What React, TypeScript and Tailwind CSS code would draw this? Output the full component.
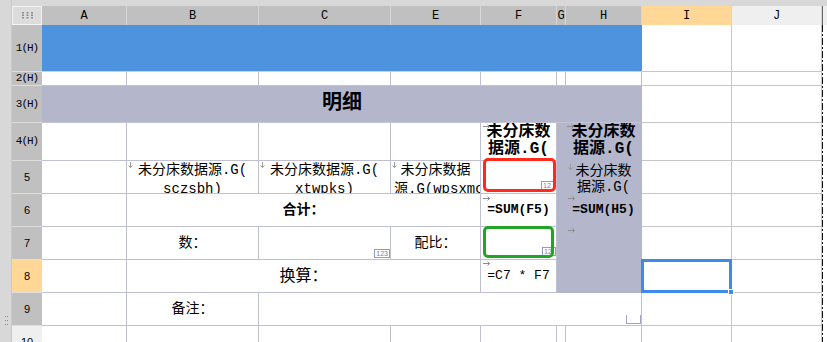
import React from "react";

const mono = "font-['Liberation_Mono','Noto_Sans_CJK_SC',monospace]";
const line = "border-r border-b border-[#bfc0d2] bg-white";
const lineIJ = "border-r border-b border-[#c6c6c6] bg-white";
const lav = "bg-[#b4b7cb]";

function ArrowR({ className = "" }: { className?: string }) {
  return (
    <svg width="8" height="5" viewBox="0 0 8 5" className={`absolute ${className}`}>
      <path d="M0 2.5H6.5M4.5 0.5L6.5 2.5L4.5 4.5" fill="none" stroke="#8c8c8c" />
    </svg>
  );
}

function ArrowD({ className = "" }: { className?: string }) {
  return (
    <svg width="5" height="6" viewBox="0 0 5 6" className={`absolute ${className}`}>
      <path d="M2.5 0V5.5M0.5 3.5L2.5 5.5L4.5 3.5" fill="none" stroke="#9a9a9a" />
    </svg>
  );
}

function TypeTag({ text, className = "" }: { text: string; className?: string }) {
  return (
    <span
      className={`absolute flex h-[9px] items-center overflow-hidden border border-[#8e9dc8] bg-white px-[1px] font-['Liberation_Sans',sans-serif] text-[7px] leading-none text-[#6c80b8] ${className}`}
    >
      {text}
    </span>
  );
}

const colHeads = [
  { label: "A", cls: "col-start-2 bg-[#c0c0c0]" },
  { label: "B", cls: "col-start-3 bg-[#c0c0c0]" },
  { label: "C", cls: "col-start-4 bg-[#c0c0c0]" },
  { label: "E", cls: "col-start-5 bg-[#c0c0c0]" },
  { label: "F", cls: "col-start-6 bg-[#c0c0c0]" },
  { label: "G", cls: "col-start-7 bg-[#c0c0c0]" },
  { label: "H", cls: "col-start-8 bg-[#c0c0c0]" },
  { label: "I", cls: "col-start-9 bg-[#ffd898]" },
  { label: "J", cls: "col-start-10 bg-[#efefef]" },
];

const rowHeads = [
  { label: "1(H)", cls: "row-start-2 bg-[#c0c0c0]", h: true },
  { label: "2(H)", cls: "row-start-3 bg-[#c0c0c0]", h: true },
  { label: "3(H)", cls: "row-start-4 bg-[#c0c0c0]", h: true },
  { label: "4(H)", cls: "row-start-5 bg-[#c0c0c0]", h: true },
  { label: "5", cls: "row-start-6 bg-[#c0c0c0]", h: false },
  { label: "6", cls: "row-start-7 bg-[#c0c0c0]", h: false },
  { label: "7", cls: "row-start-8 bg-[#c0c0c0]", h: false },
  { label: "8", cls: "row-start-9 bg-[#ffd898]", h: false },
  { label: "9", cls: "row-start-10 bg-[#c0c0c0]", h: false },
  { label: "10", cls: "row-start-11 bg-[#efefef]", h: false },
];

const rowStarts = [
  "row-start-2",
  "row-start-3",
  "row-start-4",
  "row-start-5",
  "row-start-6",
  "row-start-7",
  "row-start-8",
  "row-start-9",
  "row-start-10",
  "row-start-11",
];

export default function App() {
  return (
    <div className="flex h-[342px] w-[827px] overflow-hidden bg-[#d8d8d8] text-black">
      {/* left grip strip */}
      <div className="w-[12px] shrink-0 border-r border-[#c9c9c9] pt-[316px] pl-[5px]">
        <svg width="3" height="11" viewBox="0 0 3 11">
          <rect x="0" y="0" width="1" height="1" fill="#8a8a8a" />
          <rect x="2" y="0" width="1" height="1" fill="#8a8a8a" />
          <rect x="0" y="4" width="1" height="1" fill="#8a8a8a" />
          <rect x="2" y="4" width="1" height="1" fill="#8a8a8a" />
          <rect x="0" y="8" width="1" height="1" fill="#8a8a8a" />
          <rect x="2" y="8" width="1" height="1" fill="#8a8a8a" />
        </svg>
      </div>

      <div className="flex-1 overflow-hidden pt-[6px]">
        <div className="grid grid-cols-[30px_85px_132px_132px_90px_76px_9px_76px_90px_90px_1fr] grid-rows-[19px_47px_14px_37px_38px_33px_33px_33px_33px_33px_33px]">
          {/* corner */}
          <div className="col-start-1 row-start-1 flex items-center justify-center border border-[#f3f3f3] bg-[#dcdcdc]">
            <svg width="11" height="7" viewBox="0 0 11 7">
              {[0, 4.5, 9].map((x) =>
                [0, 2.5, 5].map((y) => (
                  <rect key={`${x}-${y}`} x={x} y={y} width="2" height="1.5" fill="#8c8c8c" />
                ))
              )}
            </svg>
          </div>

          {/* column headers */}
          {colHeads.map((c) => (
            <div
              key={c.label}
              className={`row-start-1 flex items-center justify-center overflow-visible border-r border-[#d6d6d6] ${mono} text-[12px] ${c.cls}`}
            >
              {c.label}
            </div>
          ))}
          <div className="col-start-11 row-start-1 border-l border-[#666] bg-[#efefef]" />

          {/* row headers */}
          {rowHeads.map((r) => (
            <div
              key={r.label}
              className={`col-start-1 flex items-center justify-center overflow-hidden border-b border-[#dedede] text-[11px] ${
                r.h
                  ? "font-['Liberation_Mono',monospace] tracking-[-1px]"
                  : "font-['Liberation_Sans',sans-serif]"
              } ${r.cls}`}
            >
              {r.label}
            </div>
          ))}

          {/* I / J columns */}
          {rowStarts.map((rs, i) =>
            i === 7 ? (
              <div key={`i${rs}`} className={`relative z-10 col-start-9 ${rs} ${lineIJ}`}>
                <div className="absolute -top-[1px] -left-[1px] -right-[1px] -bottom-[1px] border-[3px] border-[#3c8aeb]" />
                <div className="absolute -right-[3px] -bottom-[3px] h-[6px] w-[6px] border border-white bg-[#3c8aeb]" />
              </div>
            ) : (
              <div key={`i${rs}`} className={`col-start-9 ${rs} ${lineIJ}`} />
            )
          )}
          {rowStarts.map((rs) => (
            <div key={`j${rs}`} className={`col-start-10 ${rs} ${lineIJ}`} />
          ))}
          <div className="col-start-11 row-start-2 row-span-10 bg-white">
            <svg width="2" height="330" className="block">
              <line x1="0.5" y1="0" x2="0.5" y2="330" stroke="#111" strokeDasharray="7 2 2 2" />
            </svg>
          </div>

          {/* row 1 */}
          <div className="col-start-2 col-span-7 row-start-2 border-b border-[#cfd0dc] bg-[#4e93de]" />

          {/* row 2 */}
          <div className={`col-start-2 row-start-3 ${line}`} />
          <div className={`col-start-3 row-start-3 ${line}`} />
          <div className={`col-start-4 row-start-3 ${line}`} />
          <div className={`col-start-5 row-start-3 ${line}`} />
          <div className={`col-start-6 row-start-3 ${line}`} />
          <div className={`col-start-7 row-start-3 ${line}`} />
          <div className={`col-start-8 row-start-3 ${line}`} />

          {/* row 3 */}
          <div
            className={`col-start-2 col-span-7 row-start-4 flex items-center justify-center border-b border-[#c3c4d4] ${lav} ${mono} text-[20px] font-bold`}
          >
            明细
          </div>

          {/* row 4 */}
          <div className={`col-start-2 row-start-5 ${line}`} />
          <div className={`col-start-3 row-start-5 ${line}`} />
          <div className={`col-start-4 row-start-5 ${line}`} />
          <div className={`col-start-5 row-start-5 ${line}`} />
          <div
            className={`relative col-start-6 row-start-5 overflow-hidden whitespace-nowrap pt-[1px] text-center text-[16px] font-bold leading-[17px] ${mono} ${line}`}
          >
            <ArrowR className="left-[2px] top-[1px]" />
            <div>未分床数</div>
            <div>据源.G(</div>
          </div>

          {/* G/H shaded block */}
          <div className={`col-start-7 row-start-5 row-span-5 ${lav}`} />
          <div
            className={`relative col-start-8 row-start-5 overflow-hidden whitespace-nowrap border-r border-[#b4b7cb] pt-[1px] text-center text-[16px] font-bold leading-[17px] ${mono} ${lav}`}
          >
            <ArrowR className="left-[1px] top-[1px]" />
            <div>未分床数</div>
            <div>据源.G(</div>
          </div>
          <div
            className={`relative col-start-8 row-start-6 overflow-hidden whitespace-nowrap border-r border-[#b4b7cb] pt-[2px] text-center text-[14px] leading-[16px] ${mono} ${lav}`}
          >
            <ArrowD className="left-[2px] top-[3px]" />
            <div>未分床数</div>
            <div>据源.G(</div>
          </div>
          <div
            className={`relative col-start-8 row-start-7 overflow-hidden whitespace-nowrap border-r border-[#b4b7cb] pt-[8px] text-center text-[13px] font-bold leading-[16px] ${mono} ${lav}`}
          >
            <ArrowR className="left-[2px] top-[2px]" />
            =SUM(H5)
          </div>
          <div className={`relative col-start-8 row-start-8 row-span-2 border-r border-[#b4b7cb] ${lav}`}>
            <ArrowR className="left-[2px] top-[1px]" />
          </div>

          {/* row 5 */}
          <div className={`col-start-2 row-start-6 ${line}`} />
          <div
            className={`relative col-start-3 row-start-6 overflow-hidden whitespace-nowrap text-center text-[14px] leading-[19px] ${mono} ${line}`}
          >
            <ArrowD className="left-[1px] top-[1px]" />
            <div>未分床数据源.G(</div>
            <div>sczsbh)</div>
          </div>
          <div
            className={`relative col-start-4 row-start-6 overflow-hidden whitespace-nowrap text-center text-[14px] leading-[19px] ${mono} ${line}`}
          >
            <ArrowD className="left-[1px] top-[1px]" />
            <div>未分床数据源.G(</div>
            <div>xtwpks)</div>
          </div>
          <div
            className={`relative col-start-5 row-start-6 overflow-hidden whitespace-nowrap text-[14px] leading-[19px] ${mono} ${line}`}
          >
            <ArrowD className="left-[1px] top-[1px]" />
            <div className="text-center">未分床数据</div>
            <div className="pl-[3px]">源.G(wpsxmc</div>
          </div>
          <div className={`relative col-start-6 row-start-6 ${line}`}>
            <TypeTag text="12" className="right-[2px] bottom-[3px] w-[13px]" />
            <div className="absolute -top-[3px] left-[2px] right-0 bottom-[1px] rounded-[5px] border-[3px] border-[#ff2a1c]" />
          </div>

          {/* row 6 */}
          <div className={`col-start-2 row-start-7 ${line}`} />
          <div
            className={`col-start-3 col-span-3 row-start-7 flex items-center justify-center text-[14px] font-bold ${mono} ${line}`}
          >
            合计：
          </div>
          <div
            className={`relative col-start-6 row-start-7 overflow-hidden whitespace-nowrap pt-[8px] text-center text-[13px] font-bold leading-[16px] ${mono} ${line}`}
          >
            <ArrowR className="left-[2px] top-[2px]" />
            =SUM(F5)
          </div>

          {/* row 7 */}
          <div className={`col-start-2 row-start-8 ${line}`} />
          <div className={`col-start-3 row-start-8 flex items-center justify-center text-[14px] ${mono} ${line}`}>
            数：
          </div>
          <div className={`relative col-start-4 row-start-8 ${line}`}>
            <TypeTag text="123" className="right-0 bottom-[1px]" />
          </div>
          <div className={`col-start-5 row-start-8 flex items-center justify-center text-[14px] ${mono} ${line}`}>
            配比：
          </div>
          <div className={`relative col-start-6 row-start-8 ${line}`}>
            <TypeTag text="12" className="right-0 bottom-[3px] w-[14px]" />
            <div className="absolute -top-[1px] left-[2px] right-[2px] bottom-[1px] rounded-[5px] border-[3px] border-[#22a524]" />
          </div>

          {/* row 8 */}
          <div className={`col-start-2 row-start-9 ${line}`} />
          <div
            className={`col-start-3 col-span-3 row-start-9 flex items-center justify-center pt-[2px] text-[16px] ${mono} ${line}`}
          >
            换算：
          </div>
          <div
            className={`relative col-start-6 row-start-9 overflow-hidden whitespace-nowrap pt-[8px] text-center text-[13px] leading-[16px] ${mono} ${line}`}
          >
            <ArrowR className="left-[2px] top-[1px]" />
            =C7 * F7
          </div>

          {/* row 9 */}
          <div className={`col-start-2 row-start-10 ${line}`} />
          <div className={`col-start-3 row-start-10 flex items-center justify-center text-[14px] ${mono} ${line}`}>
            备注：
          </div>
          <div className={`relative col-start-4 col-span-5 row-start-10 ${line}`}>
            <div className="absolute right-0 bottom-[1px] h-[9px] w-[15px] border-x border-b border-[#9aa6c4]" />
          </div>

          {/* row 10 */}
          <div className={`col-start-2 row-start-11 ${line}`} />
          <div className={`col-start-3 row-start-11 ${line}`} />
          <div className={`col-start-4 row-start-11 ${line}`} />
          <div className={`col-start-5 row-start-11 ${line}`} />
          <div className={`col-start-6 row-start-11 ${line}`} />
          <div className={`col-start-7 row-start-11 ${line}`} />
          <div className={`col-start-8 row-start-11 ${line}`} />
        </div>
      </div>
    </div>
  );
}
